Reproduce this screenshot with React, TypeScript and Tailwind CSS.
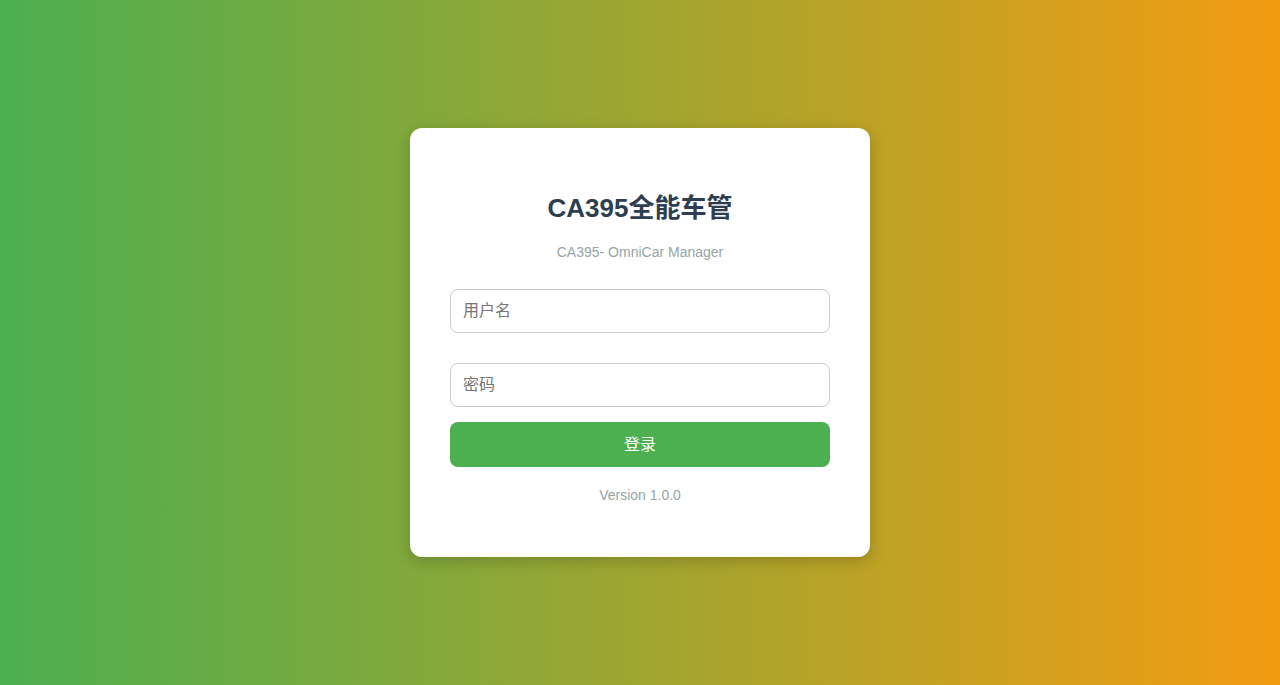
export default function App() {
  return (
    <div className="flex h-[685px] items-center justify-center bg-[linear-gradient(to_right,#4caf50,#f39c12)] font-['Liberation_Sans','Noto_Sans_CJK_SC',sans-serif]">
      <div className="flex h-[429px] w-[460px] flex-col rounded-xl bg-white px-10 pt-16 shadow-[0_4px_16px_rgba(0,0,0,0.2)]">
        <h1 className="text-center text-[26px] leading-8 font-bold text-[#2c3e50]">CA395全能车管</h1>
        <p className="mt-[18px] text-center text-sm leading-5 text-[#95a5a6]">CA395- OmniCar Manager</p>
        <input
          className="mt-[27px] h-11 w-full rounded-lg border border-[#ccc] px-3 text-base text-[#333] outline-none placeholder:text-[#757575]"
          placeholder="用户名"
        />
        <input
          type="password"
          className="mt-[30px] h-11 w-full rounded-lg border border-[#ccc] px-3 text-base text-[#333] outline-none placeholder:text-[#757575]"
          placeholder="密码"
        />
        <button className="mt-[15px] h-[45px] w-full rounded-lg bg-[#4caf50] text-base text-white">登录</button>
        <p className="mt-[18px] text-center text-sm leading-5 text-[#95a5a6]">Version 1.0.0</p>
      </div>
    </div>
  )
}
